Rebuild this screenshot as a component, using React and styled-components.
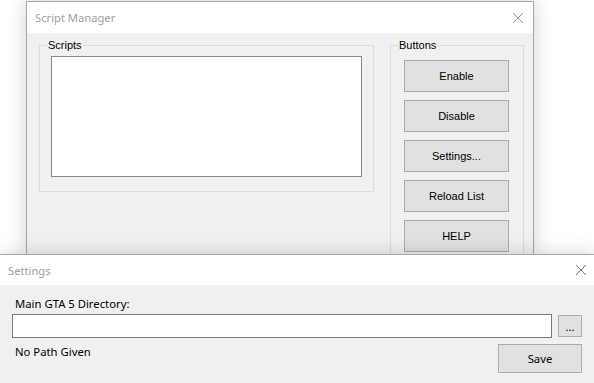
import React from 'react';
import styled, { createGlobalStyle } from 'styled-components';

const GlobalStyle = createGlobalStyle`
  html, body {
    margin: 0;
    padding: 0;
    background: #ffffff;
  }
  * {
    box-sizing: border-box;
  }
`;

const Desktop = styled.div`
  position: relative;
  width: 594px;
  height: 383px;
  overflow: hidden;
  background: #ffffff;
  font-family: "Liberation Sans", Arial, sans-serif;
  font-size: 11px;
  color: #000;
`;

// windows sit on a free desktop, so they are placed by coordinates
const Window = styled.div`
  position: absolute;
  left: ${({ left }) => left}px;
  top: ${({ top }) => top}px;
  width: ${({ width }) => width}px;
  height: ${({ height }) => height}px;
  border: 1px solid #a9a9a9;
  background: #f0f0f0;
  display: flex;
  flex-direction: column;
  overflow: hidden;
  box-shadow: 0 0 18px rgba(0, 0, 0, 0.18);
`;

const TitleBar = styled.div`
  height: ${({ h }) => h}px;
  flex: none;
  background: #ffffff;
  display: flex;
  align-items: center;
  justify-content: space-between;
  padding: 0 ${({ padR }) => padR}px 0 ${({ padL }) => padL}px;
`;

const Title = styled.span`
  font-family: "Noto Sans", "Open Sans", sans-serif;
  font-size: 11.2px;
  color: #a0a0a0;
`;

const CloseIcon = ({ color }) => (
  <svg width="12" height="12" viewBox="0 0 12 12">
    <path d="M1 1 L11 11 M11 1 L1 11" stroke={color} strokeWidth="1" fill="none" />
  </svg>
);

const ManagerClient = styled.div`
  flex: 1;
  display: flex;
  align-items: flex-start;
  gap: 16px;
  padding: 6px 0 0 12px;
`;

const GroupBox = styled.fieldset`
  margin: 0;
  width: ${({ width }) => width}px;
  height: ${({ height }) => height}px;
  border: 1px solid #dcdcdc;
  padding: 0;
`;

const Legend = styled.legend`
  padding: 0 1px;
  margin-left: 7px;
  font-size: 11px;
  line-height: 13px;
`;

const GroupBody = styled.div`
  display: flex;
  flex-direction: column;
  gap: 8px;
  padding: ${({ padT }) => padT}px ${({ padX }) => padX}px 0;
`;

const ListBox = styled.div`
  width: 311px;
  height: 121px;
  background: #ffffff;
  border: 1px solid #828790;
`;

const Button = styled.button`
  width: ${({ width }) => width}px;
  height: ${({ height }) => height}px;
  flex: none;
  background: #e1e1e1;
  border: 1px solid #adadad;
  border-radius: 0;
  padding: 0;
  font-family: ${({ segoe }) => (segoe ? '"Noto Sans", sans-serif' : '"Liberation Sans", Arial, sans-serif')};
  font-size: ${({ segoe }) => (segoe ? '11.3px' : '11px')};
  color: #000;
  cursor: pointer;
`;

const SettingsClient = styled.div`
  flex: 1;
  display: flex;
  flex-direction: column;
  padding: 11px 12px 0 12px;
  font-family: "Noto Sans", "Open Sans", sans-serif;
  font-size: 11.3px;
`;

const Label = styled.div`
  padding-left: 3px;
  line-height: 16px;
`;

const PathRow = styled.div`
  display: flex;
  align-items: center;
  gap: 6px;
  margin-top: 2px;
`;

const TextInput = styled.input`
  width: 541px;
  height: 24px;
  border: 1px solid #7a7a7a;
  background: #ffffff;
  padding: 0 4px;
  outline: none;
`;

const StatusRow = styled.div`
  display: flex;
  justify-content: space-between;
  align-items: flex-start;
  margin-top: 6px;
`;

const StatusText = styled.div`
  padding-left: 3px;
  line-height: 16px;
`;

const managerButtons = ['Enable', 'Disable', 'Settings...', 'Reload List', 'HELP'];

export default function App() {
  return (
    <>
      <GlobalStyle />
      <Desktop>
        <Window left={26} top={1} width={508} height={254}>
          <TitleBar h={31} padL={8} padR={9}>
            <Title>Script Manager</Title>
            <CloseIcon color="#9a9a9a" />
          </TitleBar>
          <ManagerClient>
            <GroupBox width={334} height={153}>
              <Legend>Scripts</Legend>
              <GroupBody padT={4} padX={11}>
                <ListBox />
              </GroupBody>
            </GroupBox>
            <GroupBox width={134} height={260}>
              <Legend>Buttons</Legend>
              <GroupBody padT={8} padX={13}>
                {managerButtons.map((label) => (
                  <Button key={label} width={105} height={32}>{label}</Button>
                ))}
              </GroupBody>
            </GroupBox>
          </ManagerClient>
        </Window>

        <Window left={-1} top={254} width={596} height={140}>
          <TitleBar h={30} padL={8} padR={7}>
            <Title>Settings</Title>
            <CloseIcon color="#707070" />
          </TitleBar>
          <SettingsClient>
            <Label>Main GTA 5 Directory:</Label>
            <PathRow>
              <TextInput />
              <Button width={24} height={22} segoe>...</Button>
            </PathRow>
            <StatusRow>
              <StatusText>No Path Given</StatusText>
              <Button width={84} height={29} segoe>Save</Button>
            </StatusRow>
          </SettingsClient>
        </Window>
      </Desktop>
    </>
  );
}
